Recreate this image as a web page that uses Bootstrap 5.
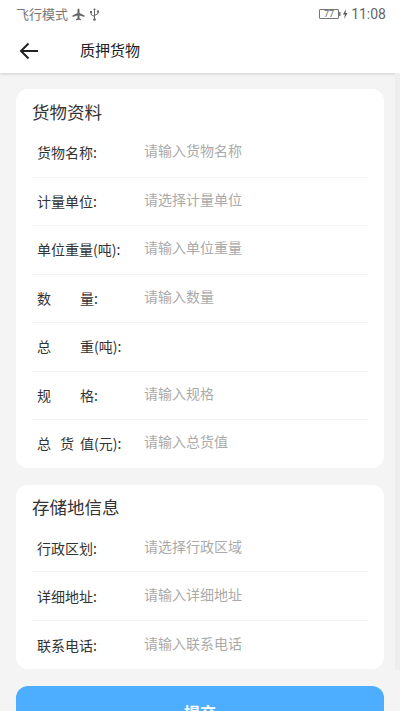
<!DOCTYPE html>
<html lang="zh">
<head>
<meta charset="utf-8">
<link rel="stylesheet" href="https://cdn.jsdelivr.net/npm/bootstrap@5.3.0/dist/css/bootstrap.min.css">
<style>
html,body{height:711px;overflow:hidden}
body{background:#f4f4f4;font-family:"Noto Sans CJK SC","Liberation Sans",sans-serif;color:#333}
.topbar{background:#fff;height:73px;box-shadow:0 1px 3px rgba(0,0,0,.16)}
.statusline{height:28px;padding:0 14px 0 16px;font-size:13px;color:#777}
.statusline .clock{font-family:"Roboto",sans-serif;font-size:14px;color:#666;margin-left:2px}
.batt{width:20px;height:10px;border:1px solid #777;border-radius:1px;font-size:9px;line-height:8px;text-align:center;font-family:"Roboto",sans-serif;color:#666}
.titleline{height:45px;padding:0 0 0 19px}
.pagetitle{font-size:15px;color:#222;margin-left:41px}
.panel{background:#fff;border-radius:12px;margin:0 16px 17px;padding:0 16px}
.panel-head{font-size:17.5px;color:#333;height:40px;padding-top:10px;line-height:26px}
.rowline{height:48.5px;font-size:14px;border-bottom:1px solid #f3f3f3;padding-left:5px;color:#333}
.rowline:last-child{border-bottom:0;height:47.5px}
.lbl{width:107px;flex:none;padding-top:13px;line-height:20px;white-space:nowrap}
.lbl .w{display:inline-block;width:14px}
.lbl .g29{margin-right:29px}
.lbl .g9{margin-right:9px}
.lbl .g6{margin-right:6px}
.hint{color:#aaa;padding-top:11px;line-height:20px}
.panel-alt .panel-head{height:39px;padding-top:9px}
.panel-alt .rowline:last-child{height:48.5px}
.panel-alt .lbl{padding-top:14px}
.panel-alt .hint{padding-top:12px}
.submit{background:#4dadff;border:0;border-radius:12px;height:52px;margin:0 16px;color:#fff;font-size:16px;font-weight:700;width:368px;display:block;padding:0}
.submit:hover{background:#4dadff;color:#fff}
.rail{position:absolute;right:0;top:73px;width:5px;height:597px;background:#eeeeee}
</style>
</head>
<body class="position-relative">
<div class="topbar">
  <div class="statusline d-flex align-items-center">
    <span>飞行模式</span>
    <svg class="ms-1" width="13" height="13" viewBox="0 0 13 13"><path d="M6.5 .5c.7 0 1 .8 1 1.700V5l5 2.600v1.300L7.500 7.600v2.600l1.500 1.100v1L6.500 11.800 4 12.300v-1l1.500-1.100V7.600L.5 8.900V7.600L5.500 5V2.200c0-.9.300-1.700 1-1.700z" fill="#666"/></svg>
    <svg class="ms-1" width="11" height="13" viewBox="0 0 11 13"><path d="M5.500 1v11M2 4v2.500l3.500 2M9 3.500v2L5.500 7.500" fill="none" stroke="#666" stroke-width="1"/><path d="M5.500 0l1.300 2H4.200z" fill="#666"/><rect x="1" y="3" width="2" height="2" fill="#666"/><rect x="8" y="2.500" width="2" height="2" fill="#666"/><circle cx="5.500" cy="11.500" r="1.300" fill="#666"/></svg>
    <span class="ms-auto d-flex align-items-center">
      <span class="batt">77</span>
      <svg width="10" height="12" viewBox="0 0 10 12"><rect x="0" y="4" width="1.500" height="4" fill="#777"/><path d="M7 1L4 6.500h2L5 11l3.500-6H6.500z" fill="#555"/></svg>
      <span class="clock">11:08</span>
    </span>
  </div>
  <div class="titleline d-flex align-items-center">
    <svg width="20" height="18" viewBox="0 0 20 18"><path d="M19 9H2M9.500 1.500L2 9l7.500 7.500" fill="none" stroke="#222" stroke-width="2"/></svg>
    <span class="pagetitle">质押货物</span>
  </div>
</div>

<div class="panel mt-3 pb-0">
  <div class="panel-head">货物资料</div>
  <div class="rowline d-flex"><div class="lbl">货物名称:</div><div class="hint">请输入货物名称</div></div>
  <div class="rowline d-flex"><div class="lbl">计量单位:</div><div class="hint">请选择计量单位</div></div>
  <div class="rowline d-flex"><div class="lbl">单位重量(吨):</div><div class="hint">请输入单位重量</div></div>
  <div class="rowline d-flex"><div class="lbl"><span class="w g29">数</span>量:</div><div class="hint">请输入数量</div></div>
  <div class="rowline d-flex"><div class="lbl"><span class="w g29">总</span>重(吨):</div><div class="hint"></div></div>
  <div class="rowline d-flex"><div class="lbl"><span class="w g29">规</span>格:</div><div class="hint">请输入规格</div></div>
  <div class="rowline d-flex"><div class="lbl"><span class="w g9">总</span><span class="w g6">货</span>值(元):</div><div class="hint">请输入总货值</div></div>
</div>

<div class="panel panel-alt">
  <div class="panel-head">存储地信息</div>
  <div class="rowline d-flex"><div class="lbl">行政区划:</div><div class="hint">请选择行政区域</div></div>
  <div class="rowline d-flex"><div class="lbl">详细地址:</div><div class="hint">请输入详细地址</div></div>
  <div class="rowline d-flex"><div class="lbl">联系电话:</div><div class="hint">请输入联系电话</div></div>
</div>

<button class="btn submit" type="button">提交</button>
<div class="rail"></div>
<script src="https://cdn.jsdelivr.net/npm/bootstrap@5.3.0/dist/js/bootstrap.bundle.min.js"></script>
</body>
</html>
